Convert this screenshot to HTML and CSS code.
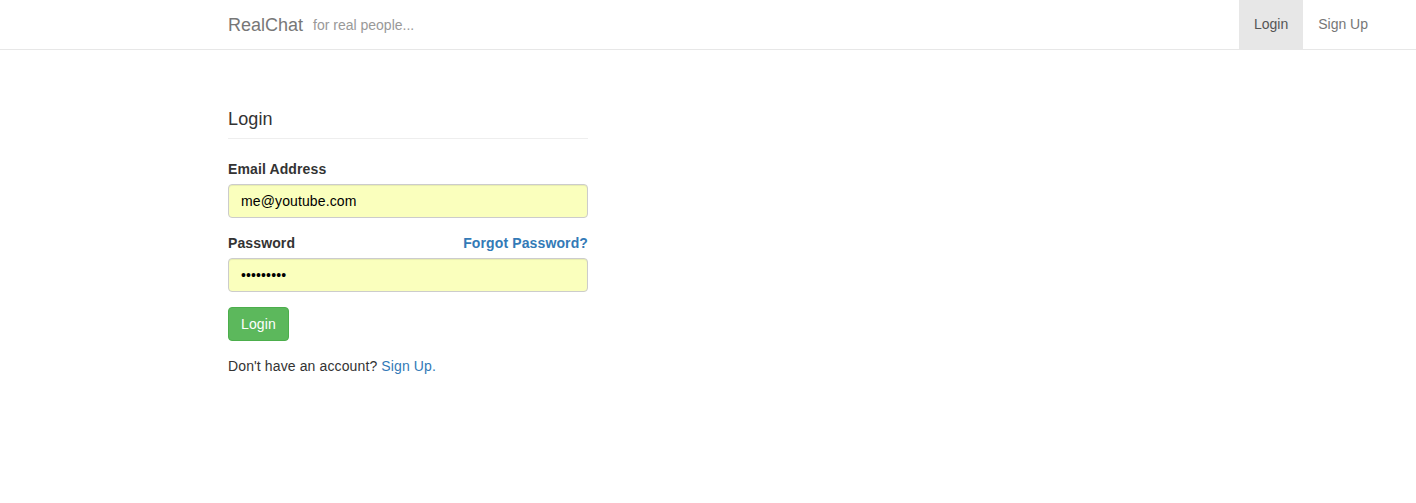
FILE: index.html
```html
<!DOCTYPE html>
<html>
<head>
<meta charset="utf-8">
<title>RealChat</title>
<link rel="stylesheet" href="styles.css">
</head>
<body>
<nav class="navbar">
  <div class="navbar-inner">
    <div class="brand">
      <a class="brand-name" href="#">RealChat</a>
      <span class="tagline">for real people...</span>
    </div>
    <ul class="nav-links">
      <li><a class="nav-link active" href="#">Login</a></li>
      <li><a class="nav-link" href="#">Sign Up</a></li>
    </ul>
  </div>
</nav>
<main class="page">
  <form class="login-form">
    <h4 class="form-title">Login</h4>
    <div class="form-group">
      <label class="label" for="email">Email Address</label>
      <input class="input" id="email" type="text" value="me@youtube.com">
    </div>
    <div class="form-group">
      <div class="label-row">
        <label class="label" for="password">Password</label>
        <a class="forgot" href="#">Forgot Password?</a>
      </div>
      <input class="input" id="password" type="password" value="123456789">
    </div>
    <button class="btn-login" type="button">Login</button>
    <p class="signup-text">Don't have an account? <a href="#" class="link">Sign Up.</a></p>
  </form>
</main>
</body>
</html>
```

FILE: styles.css
```css
* { box-sizing: border-box; }
html, body { margin: 0; padding: 0; }
body {
  font-family: "Liberation Sans", Arial, Helvetica, sans-serif;
  font-size: 14px;
  line-height: 20px;
  letter-spacing: 0.12px;
  color: #333;
  background: #fff;
}
a { text-decoration: none; }

.navbar {
  height: 50px;
  border-bottom: 1px solid #e7e7e7;
  background: #fff;
  letter-spacing: 0;
}
.navbar-inner {
  display: flex;
  justify-content: space-between;
  align-items: stretch;
  height: 49px;
  padding-left: 213px;
  padding-right: 33px;
}
.brand {
  display: flex;
  align-items: center;
  padding-left: 15px;
}
.brand-name {
  font-size: 18px;
  color: #777;
  line-height: 20px;
}
.tagline {
  font-size: 14px;
  color: #999;
  margin-left: 10px;
  margin-top: 1px;
}
.nav-links {
  display: flex;
  list-style: none;
  margin: 0;
  padding: 0;
}
.nav-link {
  display: block;
  height: 49px;
  padding: 14px 15px 15px;
  color: #777;
  line-height: 20px;
}
.nav-link.active {
  background: #e7e7e7;
  color: #555;
}

.page {
  padding-left: 228px;
  padding-top: 59px;
}
.login-form {
  width: 360px;
}
.form-title {
  margin: 0 0 20px;
  font-size: 18px;
  font-weight: normal;
  line-height: 20px;
  padding-bottom: 9px;
  border-bottom: 1px solid #eee;
  color: #333;
}
.form-group {
  margin-bottom: 15px;
}
.label {
  display: block;
  font-weight: bold;
  margin-bottom: 5px;
  line-height: 20px;
}
.label-row {
  display: flex;
  justify-content: space-between;
}
.forgot {
  color: #337ab7;
  font-weight: bold;
  line-height: 20px;
}
.input {
  display: block;
  width: 100%;
  height: 34px;
  padding: 6px 12px;
  font-family: inherit;
  font-size: 14px;
  letter-spacing: 0.12px;
  color: #000;
  background: #faffbd;
  border: 1px solid #ccc;
  border-radius: 4px;
  box-shadow: inset 0 1px 1px rgba(0,0,0,.075);
  outline: none;
}
.btn-login {
  display: block;
  height: 34px;
  padding: 6px 12px;
  font-family: inherit;
  font-size: 14px;
  letter-spacing: 0.12px;
  line-height: 20px;
  color: #fff;
  background: #5cb85c;
  border: 1px solid #4cae4c;
  border-radius: 4px;
  cursor: pointer;
}
.signup-text {
  margin: 15px 0 0;
}
.link {
  color: #337ab7;
}
```
